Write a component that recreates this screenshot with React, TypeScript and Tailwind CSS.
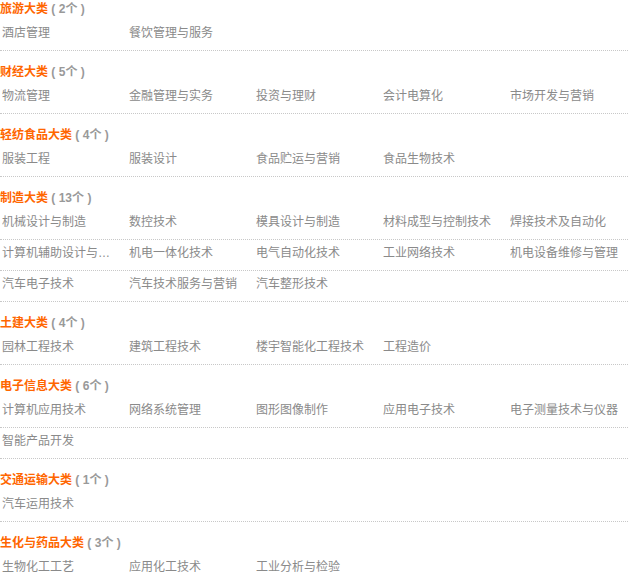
const data: { name: string; items: string[] }[] = [
  { name: "旅游大类", items: ["酒店管理", "餐饮管理与服务"] },
  { name: "财经大类", items: ["物流管理", "金融管理与实务", "投资与理财", "会计电算化", "市场开发与营销"] },
  { name: "轻纺食品大类", items: ["服装工程", "服装设计", "食品贮运与营销", "食品生物技术"] },
  {
    name: "制造大类",
    items: [
      "机械设计与制造", "数控技术", "模具设计与制造", "材料成型与控制技术", "焊接技术及自动化",
      "计算机辅助设计与制造", "机电一体化技术", "电气自动化技术", "工业网络技术", "机电设备维修与管理",
      "汽车电子技术", "汽车技术服务与营销", "汽车整形技术",
    ],
  },
  { name: "土建大类", items: ["园林工程技术", "建筑工程技术", "楼宇智能化工程技术", "工程造价"] },
  { name: "电子信息大类", items: ["计算机应用技术", "网络系统管理", "图形图像制作", "应用电子技术", "电子测量技术与仪器", "智能产品开发"] },
  { name: "交通运输大类", items: ["汽车运用技术"] },
  { name: "生化与药品大类", items: ["生物化工工艺", "应用化工技术", "工业分析与检验"] },
];

const chunk = (arr: string[]) => {
  const rows: string[][] = [];
  for (let i = 0; i < arr.length; i += 5) rows.push(arr.slice(i, i + 5));
  return rows;
};

export default function App() {
  return (
    <div
      className="w-[628px] bg-white text-[12px]"
      style={{ fontFamily: '"Liberation Sans", "Noto Sans CJK SC", sans-serif' }}
    >
      {data.map((sec) => (
        <div key={sec.name} className="mb-3">
          <div className="h-5 leading-[18px] font-bold">
            <span className="text-[#ff6600]">{sec.name}</span>
            <span className="text-[#999]"> ( {sec.items.length}个 )</span>
          </div>
          {chunk(sec.items).map((row, i) => (
            <div key={i} className="flex h-[31px] border-b border-dotted border-[#c8c8c8] pl-[2px] leading-[26px] text-[#8a8a8a]">
              {row.map((it) => (
                <div key={it} className="w-[127px] shrink-0 truncate pr-[8px]">
                  {it}
                </div>
              ))}
            </div>
          ))}
        </div>
      ))}
    </div>
  );
}
